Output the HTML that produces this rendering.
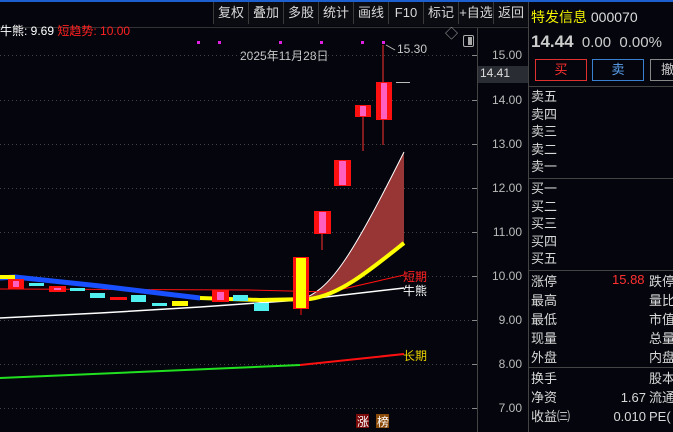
<!DOCTYPE html><html><head><meta charset="utf-8"><style>
*{margin:0;padding:0;box-sizing:border-box}
body{width:673px;height:432px;background:#05060d;overflow:hidden;position:relative;font-family:"Liberation Sans","Noto Sans CJK SC",sans-serif;color:#d0d0d0}
.a{position:absolute;white-space:nowrap}
.tb{position:absolute;top:2px;height:22px;font-size:13px;color:#d8d8d8;line-height:22px;text-align:center;border-left:1px solid #3a3a3a}
.r{font-size:13px;color:#d8d8d8}
</style></head><body>
<div class="a" style="left:0;top:0;width:673px;height:2px;background:#1e5fd0"></div>
<div class="a" style="left:213px;top:2px;width:315px;height:24px;background:#0b0c12"></div>
<div class="tb" style="left:213px;width:35px">复权</div>
<div class="tb" style="left:248px;width:35px">叠加</div>
<div class="tb" style="left:283px;width:35px">多股</div>
<div class="tb" style="left:318px;width:35px">统计</div>
<div class="tb" style="left:353px;width:35px">画线</div>
<div class="tb" style="left:388px;width:35px">F10</div>
<div class="tb" style="left:423px;width:35px">标记</div>
<div class="tb" style="left:458px;width:35px">+自选</div>
<div class="tb" style="left:493px;width:35px">返回</div>
<div class="a" style="left:0;top:27px;width:528px;height:1px;background:#333"></div>
<div class="a" style="left:528px;top:2px;width:1px;height:430px;background:#444"></div>
<div class="a" style="left:477px;top:28px;width:1px;height:404px;background:#444"></div>
<div class="a" style="left:0;top:22px;font-size:12px;color:#fff">牛熊: 9.69 <span style="color:#ff2020">短趋势: 10.00</span></div>
<div class="a" style="left:445px;top:23px;font-size:13px;color:#aaa">◇</div>
<div class="a" style="left:463px;top:35px;width:11px;height:12px;border:1px solid #aaa;border-radius:2px"><div style="position:absolute;right:1px;top:1px;width:4px;height:8px;background:#aaa"></div></div>
<div class="a" style="left:240px;top:47px;font-size:12px;color:#c8c8c8">2025年11月28日</div>
<div class="a" style="left:397px;top:42px;font-size:12px;color:#c8c8c8">15.30</div>
<svg class="a" style="left:0;top:0" width="478" height="432">
<g stroke="#444" stroke-dasharray="1 3" stroke-width="1">
<line x1="0" y1="55.5" x2="477" y2="55.5"/><line x1="0" y1="100.5" x2="477" y2="100.5"/><line x1="0" y1="144.5" x2="477" y2="144.5"/><line x1="0" y1="188.5" x2="477" y2="188.5"/><line x1="0" y1="232.5" x2="477" y2="232.5"/><line x1="0" y1="276.5" x2="477" y2="276.5"/><line x1="0" y1="320.5" x2="477" y2="320.5"/><line x1="0" y1="364.5" x2="477" y2="364.5"/><line x1="0" y1="408.5" x2="477" y2="408.5"/></g>
<g fill="#e020e0"><rect x="197" y="41" width="3" height="3"/><rect x="218" y="41" width="3" height="3"/><rect x="279" y="41" width="3" height="3"/><rect x="320" y="41" width="3" height="3"/><rect x="361" y="41" width="3" height="3"/><rect x="382" y="41" width="3" height="3"/></g>
<path d="M386 45 L395 50" stroke="#bbb"/>
<line x1="396" y1="82.5" x2="410" y2="82.5" stroke="#bbb"/>
<!-- area -->
<path d="M300 300 C330 290 350 260 404 152 L404 243 C370 275 340 295 300 300Z" fill="#983535"/>
<path d="M300 300 C330 290 350 260 404 152" stroke="#fff" fill="none" stroke-width="1"/>
<!-- lines -->
<path d="M0 378 L300 365" stroke="#20e020" stroke-width="2" fill="none"/>
<path d="M300 365 L404 354" stroke="#ff1010" stroke-width="2" fill="none"/>
<path d="M0 318 L100 313 L200 307 L300 300 L404 288" stroke="#fff" stroke-width="1.5" fill="none"/>
<path d="M0 289 L250 290 L330 292 L404 275" stroke="#ff1010" stroke-width="1" fill="none"/>
<path d="M0 278 L15 277 L100 286 L200 298" stroke="#1850ff" stroke-width="5" fill="none"/>
<path d="M0 277 L15 277" stroke="#ff0" stroke-width="4"/>
<path d="M200 298 L260 300 L310 299 C340 295 370 270 404 243" stroke="#ff0" stroke-width="4" fill="none"/>
<!-- small candles -->
<g fill="#ff1010"><rect x="8" y="279" width="16" height="10"/><rect x="49" y="286" width="17" height="6"/><rect x="110" y="297" width="17" height="3"/><rect x="212" y="290" width="17" height="12"/></g>
<g fill="#ff60c0"><rect x="13" y="281" width="6" height="6"/><rect x="54" y="288" width="7" height="2"/><rect x="217" y="292" width="7" height="8"/></g>
<g fill="#50f0f0"><rect x="29" y="283" width="15" height="3"/><rect x="70" y="288" width="15" height="3"/><rect x="90" y="293" width="15" height="5"/><rect x="131" y="295" width="15" height="7"/><rect x="152" y="303" width="15" height="3"/><rect x="233" y="295" width="15" height="6"/><rect x="254" y="303" width="15" height="8"/></g>
<rect x="172" y="301" width="16" height="5" fill="#ff0"/>
<!-- big candles -->
<line x1="301" y1="257" x2="301" y2="315" stroke="#ff1010"/>
<rect x="293" y="257" width="16" height="52" fill="#ff1010"/><rect x="296" y="258" width="10" height="50" fill="#ff0"/>
<line x1="322" y1="211" x2="322" y2="250" stroke="#ff3030"/>
<rect x="314" y="211" width="17" height="23" fill="#ff1010"/><rect x="319" y="212" width="7" height="21" fill="#ff60c0"/>
<rect x="334" y="160" width="17" height="26" fill="#ff1010"/><rect x="339" y="161" width="7" height="24" fill="#ff60c0"/>
<line x1="363" y1="105" x2="363" y2="151" stroke="#ff3030"/>
<rect x="355" y="105" width="16" height="12" fill="#ff1010"/><rect x="360" y="106" width="6" height="10" fill="#ff60c0"/>
<line x1="383" y1="45" x2="383" y2="145" stroke="#ff3030"/>
<rect x="376" y="82" width="16" height="38" fill="#ff1010"/><rect x="381" y="83" width="6" height="36" fill="#ff60c0"/>
<g stroke="#888"><line x1="472" y1="55.5" x2="477" y2="55.5"/><line x1="472" y1="100.5" x2="477" y2="100.5"/><line x1="472" y1="144.5" x2="477" y2="144.5"/><line x1="472" y1="188.5" x2="477" y2="188.5"/><line x1="472" y1="232.5" x2="477" y2="232.5"/><line x1="472" y1="276.5" x2="477" y2="276.5"/><line x1="472" y1="320.5" x2="477" y2="320.5"/><line x1="472" y1="364.5" x2="477" y2="364.5"/><line x1="472" y1="408.5" x2="477" y2="408.5"/></g>
<rect x="356" y="414" width="13" height="14" fill="#7a0a0a"/><rect x="376" y="414" width="13" height="14" fill="#8a4a0a"/>
</svg>
<div class="a" style="left:357px;top:413px;font-size:12px;color:#fff">涨</div>
<div class="a" style="left:377px;top:413px;font-size:12px;color:#fff">榜</div>
<div class="a" style="left:403px;top:268px;font-size:12px;color:#ff2020">短期</div>
<div class="a" style="left:403px;top:282px;font-size:12px;color:#fff">牛熊</div>
<div class="a" style="left:403px;top:347px;font-size:12px;color:#e8d000">长期</div>
<!-- axis labels -->
<div class="a" style="left:478px;top:66px;width:50px;height:17px;background:#2a2c33"></div>
<div class="a r" style="left:480px;top:66px;font-size:12px;color:#ddd">14.41</div>
<div class="a" style="left:478px;top:47px;width:44px;text-align:right;font-size:12px;color:#bbb;line-height:16px">15.00</div>
<div class="a" style="left:478px;top:92px;width:44px;text-align:right;font-size:12px;color:#bbb;line-height:16px">14.00</div>
<div class="a" style="left:478px;top:136px;width:44px;text-align:right;font-size:12px;color:#bbb;line-height:16px">13.00</div>
<div class="a" style="left:478px;top:180px;width:44px;text-align:right;font-size:12px;color:#bbb;line-height:16px">12.00</div>
<div class="a" style="left:478px;top:224px;width:44px;text-align:right;font-size:12px;color:#bbb;line-height:16px">11.00</div>
<div class="a" style="left:478px;top:268px;width:44px;text-align:right;font-size:12px;color:#bbb;line-height:16px">10.00</div>
<div class="a" style="left:478px;top:312px;width:44px;text-align:right;font-size:12px;color:#bbb;line-height:16px">9.00</div>
<div class="a" style="left:478px;top:356px;width:44px;text-align:right;font-size:12px;color:#bbb;line-height:16px">8.00</div>
<div class="a" style="left:478px;top:400px;width:44px;text-align:right;font-size:12px;color:#bbb;line-height:16px">7.00</div>
<!-- right panel -->
<div class="a" style="left:531px;top:7px;font-size:14px;color:#f0f000">特发信息 <span style="color:#ddd">000070</span></div>
<div class="a" style="left:531px;top:32px;font-size:15px;color:#ccc"><b style="font-size:17px">14.44</b>&nbsp; 0.00&nbsp; 0.00%</div>
<div class="a" style="left:535px;top:59px;width:52px;height:22px;border:1px solid #e03030;color:#ff3030;text-align:center;line-height:20px;font-size:13px">买</div>
<div class="a" style="left:592px;top:59px;width:52px;height:22px;border:1px solid #3a80d0;color:#5aa0f0;text-align:center;line-height:20px;font-size:13px">卖</div>
<div class="a" style="left:650px;top:59px;width:30px;height:22px;border:1px solid #888;color:#ccc;padding-left:10px;line-height:20px;font-size:13px">撤</div>
<div class="a" style="left:529px;top:86px;width:144px;height:1px;background:#444"></div>
<div class="a" style="left:529px;top:178px;width:144px;height:1px;background:#444"></div>
<div class="a" style="left:529px;top:270px;width:144px;height:1px;background:#444"></div>
<div class="a" style="left:529px;top:367px;width:144px;height:1px;background:#444"></div>
<div class="a r" style="left:531px;top:88px;line-height:17.6px">卖五<br>卖四<br>卖三<br>卖二<br>卖一</div>
<div class="a r" style="left:531px;top:180px;line-height:17.6px">买一<br>买二<br>买三<br>买四<br>买五</div>
<div class="a r" style="left:531px;top:272px;line-height:19px">涨停<br>最高<br>最低<br>现量<br>外盘</div>
<div class="a r" style="left:612px;top:272px;color:#ff3030">15.88</div>
<div class="a r" style="left:649px;top:272px;line-height:19px">跌停<br>量比<br>市值<br>总量<br>内盘</div>
<div class="a r" style="left:531px;top:369px;line-height:19px">换手<br>净资<br>收益㈢</div>
<div class="a r" style="left:608px;top:388px;line-height:19px;text-align:right;width:38px">1.67<br>0.010</div>
<div class="a r" style="left:649px;top:369px;line-height:19px">股本<br>流通<br>PE(</div>
</body></html>
